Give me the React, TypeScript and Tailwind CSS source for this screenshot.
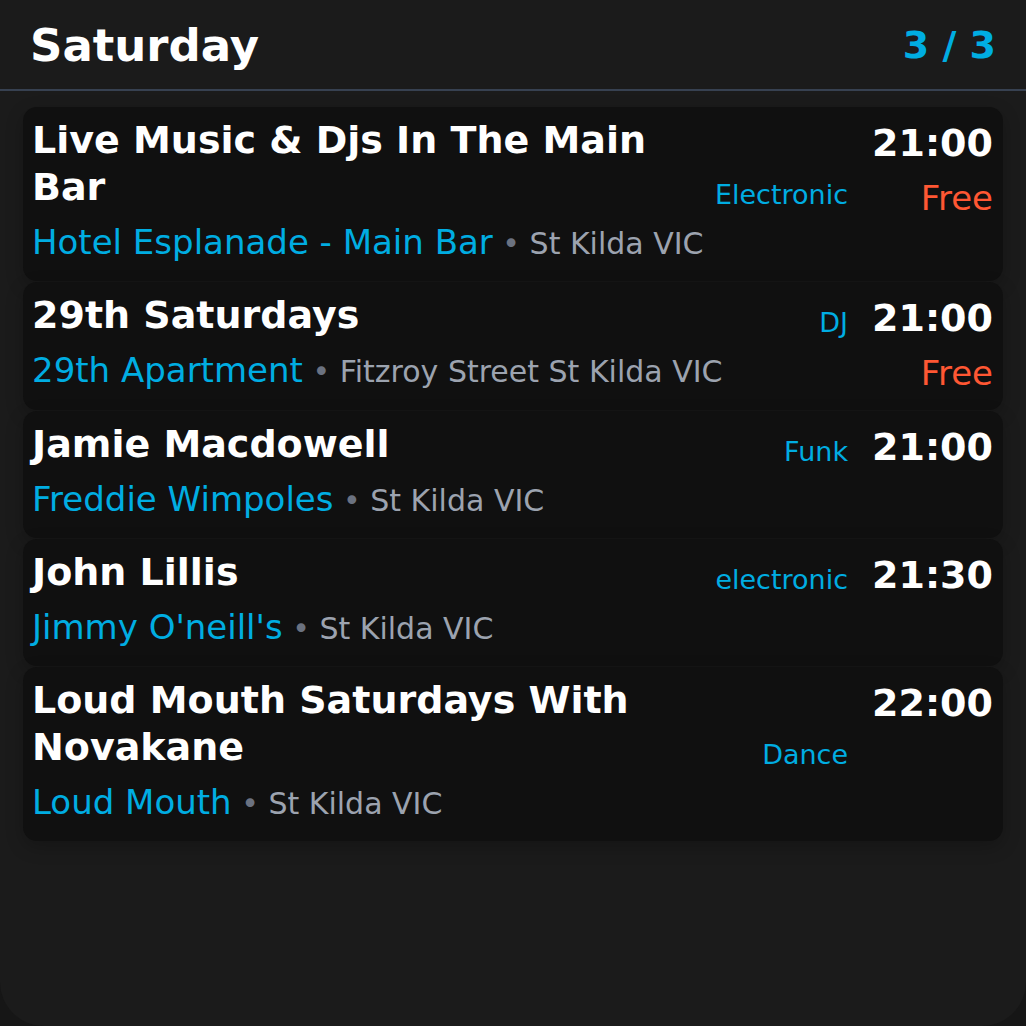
import React from "react";

// Saturday gig list, as shown on the venue display
const EVENTS = [
  {
    title: "Live Music & Djs In The Main Bar",
    venue: "Hotel Esplanade - Main Bar",
    location: "St Kilda VIC",
    genre: "Electronic",
    time: "21:00",
    price: "Free",
  },
  {
    title: "29th Saturdays",
    venue: "29th Apartment",
    location: "Fitzroy Street St Kilda VIC",
    genre: "DJ",
    time: "21:00",
    price: "Free",
  },
  {
    title: "Jamie Macdowell",
    venue: "Freddie Wimpoles",
    location: "St Kilda VIC",
    genre: "Funk",
    time: "21:00",
  },
  {
    title: "John Lillis",
    venue: "Jimmy O'neill's",
    location: "St Kilda VIC",
    genre: "electronic",
    time: "21:30",
  },
  {
    title: "Loud Mouth Saturdays With Novakane",
    venue: "Loud Mouth",
    location: "St Kilda VIC",
    genre: "Dance",
    time: "22:00",
  },
];

type Event = (typeof EVENTS)[number] & { price?: string };

export default function App() {
  return (
    <div className="min-h-screen bg-[#161616] font-['DejaVu_Sans',sans-serif]">
      <div className="h-[1026px] bg-[#1b1b1b] rounded-b-[44px] overflow-hidden">
        {/* Header */}
        <div className="h-[91px] px-[30px] pt-[2px] flex items-center justify-between border-b-2 border-[#374151]">
          <h1 className="text-[45px] font-bold text-white">Saturday</h1>
          <span className="text-[38px] font-bold text-[#00ade2]">3 / 3</span>
        </div>

        {/* Event list */}
        <div className="px-[23px] pt-[16px] flex flex-col gap-px">
          {EVENTS.map((ev, i) => (
            <EventCard key={i} event={ev} />
          ))}
        </div>
      </div>
    </div>
  );
}

function EventCard({ event }: { event: Event }) {
  return (
    <div className="bg-[#101010] rounded-[14px] pl-[9px] pr-[10px] pt-[10px] pb-[12px] flex gap-6 shadow-[0_6px_18px_rgba(0,0,0,0.22)]">
      <div className="flex-1 min-w-0">
        <div className="flex items-end gap-4">
          <h3 className="flex-1 min-w-0 text-[38px] leading-[47px] font-bold text-white">{event.title}</h3>
          <span className="shrink-0 text-[27px] leading-[32px] text-[#00ade2]">{event.genre}</span>
        </div>
        <div className="mt-[6px] text-[34px] leading-[51px] whitespace-nowrap">
          <span className="text-[#00ade2]">{event.venue}</span>
          <span className="text-[30px] text-[#6b7280]"> • </span>
          <span className="text-[30px] text-[#9ca3af]">{event.location}</span>
        </div>
      </div>
      <div className="shrink-0 text-right">
        <div className="text-[38px] leading-[52px] font-bold text-white">{event.time}</div>
        {event.price && (
          <div className="mt-[4px] text-[34px] leading-[50px] text-[#ff5733]">{event.price}</div>
        )}
      </div>
    </div>
  );
}
